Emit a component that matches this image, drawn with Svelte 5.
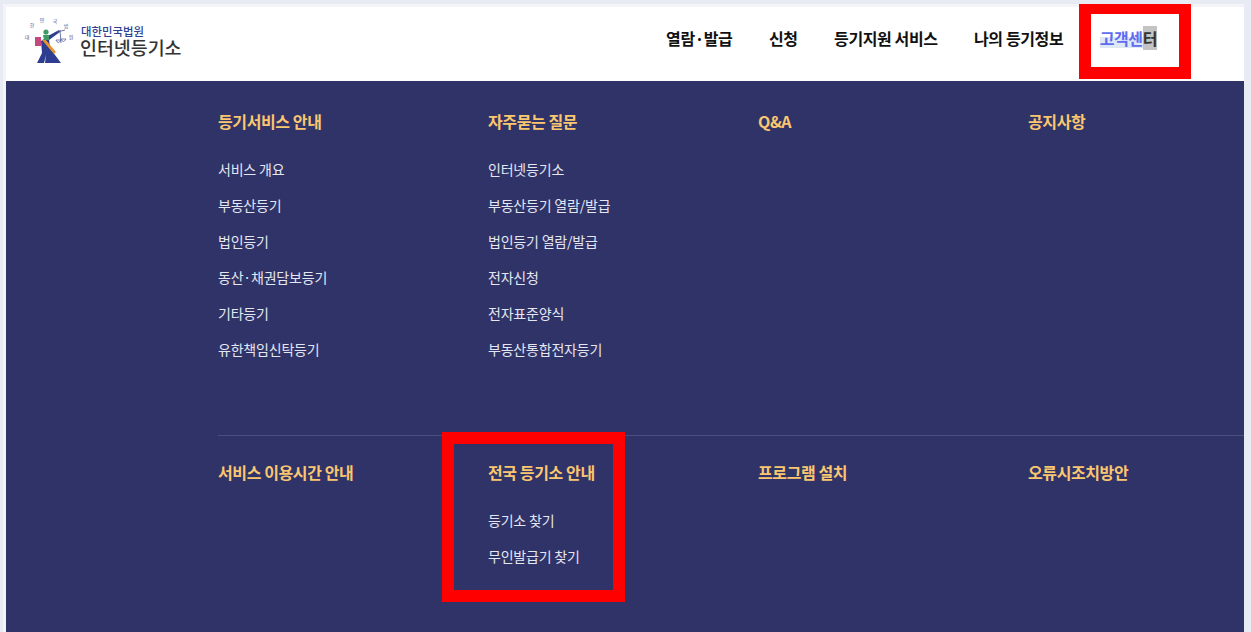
<script>
  const nav = ['열람·발급', '신청', '등기지원 서비스', '나의 등기정보'];
  const top = [
    { title: '등기서비스 안내', links: ['서비스 개요', '부동산등기', '법인등기', '동산·채권담보등기', '기타등기', '유한책임신탁등기'] },
    { title: '자주묻는 질문', links: ['인터넷등기소', '부동산등기 열람/발급', '법인등기 열람/발급', '전자신청', '전자표준양식', '부동산통합전자등기'] },
    { title: 'Q&A', links: [] },
    { title: '공지사항', links: [] }
  ];
  const bottom = [
    { title: '서비스 이용시간 안내', links: [] },
    { title: '전국 등기소 안내', links: ['등기소 찾기', '무인발급기 찾기'] },
    { title: '프로그램 설치', links: [] },
    { title: '오류시조치방안', links: [] }
  ];
  const seal = [
    { ch: '대', x: 4, y: 24 },
    { ch: '한', x: 9, y: 12 },
    { ch: '민', x: 19, y: 7 },
    { ch: '국', x: 32, y: 8 },
    { ch: '법', x: 43, y: 13 },
    { ch: '원', x: 48, y: 24 }
  ];
</script>

{#snippet group(columns)}
  <div class="row">
    {#each columns as col}
      <div class="col">
        <h3>{col.title}</h3>
        {#if col.links.length}
          <ul>
            {#each col.links as link}
              <li>{link}</li>
            {/each}
          </ul>
        {/if}
      </div>
    {/each}
  </div>
{/snippet}

<div class="page">
  <div class="frame">
    <header>
      <div class="logo">
        <svg width="58" height="52" viewBox="0 0 58 52" aria-hidden="true">
          <!-- court seal figure -->
          {#each seal as s}
            <text x={s.x} y={s.y} class="seal">{s.ch}</text>
          {/each}
          <rect x="12" y="22" width="6" height="9" fill="#c4487e" />
          <path d="M18 26 L21 24 L26 24 L27 33 L32 40 L38 48 L22 48 L23 40 L21 48 L14 48 L19 38 Z" fill="#2e3d8f" />
          <path d="M19 25 L22 24 L33 37 L31 39 Z" fill="#e8932f" />
          <path d="M25 21 L36 15 L37 17 L26 25 Z" fill="#2e3d8f" />
          <circle cx="23" cy="17" r="2.6" fill="#3f9a63" />
          <path d="M20 20 L26 20 L26 25 L21 25 Z" fill="#3f9a63" />
          <path d="M37 15 L38 28 M34 17 L42 15" stroke="#4a5698" stroke-width="0.8" fill="none" />
          <path d="M33 25 Q35 30 38 25 Z M38 24 Q40 29 43 24 Z" stroke="#4a5698" stroke-width="0.7" fill="none" />
        </svg>
        <div class="logo-text">
          <span class="court">대한민국법원</span>
          <strong>인터넷등기소</strong>
        </div>
      </div>
      <nav>
        {#each nav as item}
          <span>{item}</span>
        {/each}
        <span class="current"><span class="sel">고객센</span><span class="sel-gray">터</span></span>
      </nav>
    </header>
    <main>
      {@render group(top)}
      <hr />
      {@render group(bottom)}
    </main>
  </div>
  <div class="mark mark-nav"></div>
  <div class="mark mark-find"></div>
</div>

<style>
  :global(body) {
    background: #e8ebf3;
    font-family: "Noto Sans CJK KR", "Noto Sans", sans-serif;
  }

  .page {
    position: relative;
    height: 632px;
    overflow: hidden;
    padding: 4px 7px 0 3px;
    box-sizing: border-box;
  }

  .frame {
    height: 100%;
    background: #f3f4f8;
    padding: 3px 0 0 3px;
    box-sizing: border-box;
    display: flex;
    flex-direction: column;
  }

  header {
    height: 74px;
    flex: none;
    background: #fff;
    display: flex;
    align-items: center;
    justify-content: space-between;
    padding: 0 87px 0 17px;
  }

  .logo {
    display: flex;
    align-items: center;
  }

  .logo svg {
    display: block;
    margin-bottom: 6px;
  }

  .seal {
    font-size: 5px;
    fill: #4a5698;
    text-anchor: middle;
  }

  .logo-text {
    display: flex;
    flex-direction: column;
    margin-left: -1px;
    margin-bottom: 7px;
  }

  .court {
    font-size: 11.4px;
    line-height: 12px;
    font-weight: 500;
    color: #2f3f94;
    margin-left: 1px;
  }

  .logo-text strong {
    font-size: 18.4px;
    line-height: 20px;
    font-weight: 500;
    color: #333;
  }

  nav {
    display: flex;
    align-items: center;
    gap: 36.5px;
    font-size: 16px;
    font-weight: 700;
    letter-spacing: -0.4px;
    color: #111;
    margin-bottom: 12px;
  }

  .current {
    display: flex;
    align-items: flex-end;
  }

  .sel {
    color: #5f6cf0;
    background: linear-gradient(to bottom, #fff 0 11px, #dfe9f6 11px 22px, #fff 22px);
    height: 24px;
    line-height: 24px;
  }

  .sel-gray {
    background: #c4c4c4;
    color: #333;
    height: 24px;
    line-height: 24px;
  }

  main {
    flex: 1;
    background: #2f3368;
    padding: 23px 0 0 212px;
  }

  .row {
    display: grid;
    grid-template-columns: repeat(4, 270px);
  }

  h3 {
    margin: 0;
    font-size: 16px;
    line-height: 34px;
    font-weight: 700;
    letter-spacing: -0.4px;
    color: #fbc670;
  }

  ul {
    list-style: none;
    margin: 19px 0 0;
    padding: 0;
    display: flex;
    flex-direction: column;
    gap: 12px;
  }

  li {
    font-size: 14px;
    line-height: 24px;
    letter-spacing: -0.2px;
    color: #e4e6f2;
  }

  hr {
    border: 0;
    height: 1px;
    background: #4b4f7f;
    margin: 74px 0 19px;
  }

  .mark {
    position: absolute;
    box-sizing: border-box;
    border: 12px solid #f00;
  }

  .mark-nav {
    left: 1079px;
    top: 4px;
    width: 112px;
    height: 75px;
    border-top-width: 10px;
  }

  .mark-find {
    left: 442px;
    top: 432px;
    width: 183px;
    height: 170px;
  }
</style>
